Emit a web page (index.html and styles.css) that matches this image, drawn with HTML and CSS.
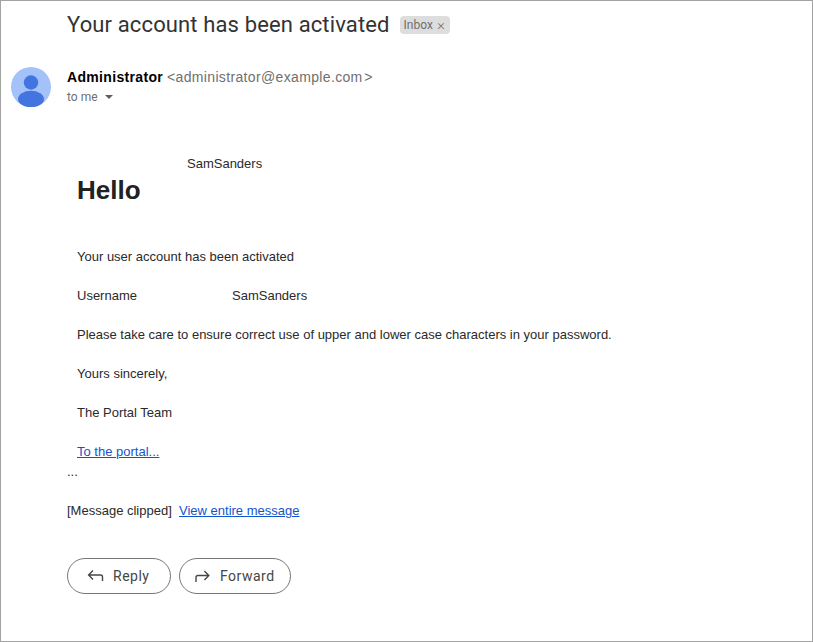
FILE: index.html
```html
<!DOCTYPE html>
<html lang="en">
<head>
<meta charset="utf-8">
<title>Your account has been activated</title>
<link rel="stylesheet" href="styles.css">
</head>
<body>
<main class="frame">
  <header class="subject">
    <h1 class="subject-title">Your account has been activated</h1>
    <span class="label">Inbox<span class="label-x">×</span></span>
  </header>
  <section class="sender">
    <svg class="avatar" viewBox="0 0 40 40" aria-hidden="true">
      <circle cx="20" cy="20" r="20" fill="#a3c2fa"/>
      <circle cx="20" cy="15.5" r="7.2" fill="#4374e0"/>
      <ellipse cx="20" cy="32" rx="13" ry="8.2" fill="#4374e0"/>
    </svg>
    <div class="sender-info">
      <div class="sender-line"><strong class="sender-name">Administrator</strong> <span class="sender-mail">&lt;administrator@example.com&#8202;&gt;</span></div>
      <div class="recipient">to me <span class="caret"></span></div>
    </div>
  </section>
  <article class="message">
    <div class="mail-body">
      <div class="greeting-name">SamSanders</div>
      <h2 class="greeting">Hello</h2>
      <p class="para para-first">Your user account has been activated</p>
      <p class="para user-row"><span class="user-key">Username</span><span>SamSanders</span></p>
      <p class="para">Please take care to ensure correct use of upper and lower case characters in your password.</p>
      <p class="para">Yours sincerely,</p>
      <p class="para">The Portal Team</p>
      <p class="para"><a class="link" href="#">To the portal...</a></p>
    </div>
    <div class="ellipsis">...</div>
    <div class="clipped">[Message clipped]&nbsp; <a class="link" href="#">View entire message</a></div>
  </article>
  <div class="actions">
    <button class="action action-reply" type="button">
      <svg class="action-icon" viewBox="0 0 18 18" aria-hidden="true"><path d="M7 3.6 2.6 8 7 12.4M2.9 8H14.5C15.9 8 16.5 8.8 16.5 10v4" fill="none" stroke="#444746" stroke-width="1.4"/></svg>
      Reply
    </button>
    <button class="action action-forward" type="button">
      <svg class="action-icon" viewBox="0 0 18 18" aria-hidden="true"><path d="M11.4 4.1 15.8 8.5 11.4 12.9M15.5 8.5H5C3.6 8.5 3 9.3 3 10.5V15" fill="none" stroke="#444746" stroke-width="1.4"/></svg>
      Forward
    </button>
  </div>
</main>
</body>
</html>
```
FILE: styles.css
```css
* { box-sizing: border-box; }
html, body { margin: 0; padding: 0; }
body { font-family: "Liberation Sans", Arial, sans-serif; background: #fff; color: #222; }
.frame { width: 813px; height: 642px; border: 1px solid #a3a3a3; padding: 0 0 0 10px; overflow: hidden; }
.subject { display: flex; align-items: center; gap: 10px; margin-left: 56px; height: 48px; }
.subject-title { margin: 0; font-family: Roboto, sans-serif; font-size: 22px; font-weight: 400; letter-spacing: 0.13px; color: #333; line-height: 48px; white-space: nowrap; }
.label { display: flex; align-items: center; gap: 4px; background: #dddddd; color: #707070; font-family: Roboto, sans-serif; font-size: 12px; border-radius: 4px; height: 18px; padding: 0 5px 0 4px; white-space: nowrap; }
.label-x { font-size: 15px; font-weight: 300; }
.sender { display: flex; gap: 16px; margin-top: 18px; height: 40px; }
.avatar { width: 40px; height: 40px; flex: none; }
.sender-line { font-size: 14px; line-height: 20px; white-space: nowrap; }
.sender-name { color: #000; font-weight: 700; letter-spacing: 0.33px; }
.sender-mail { color: #6f6f6f; letter-spacing: 0.35px; }
.recipient { font-family: Roboto, sans-serif; font-size: 12px; color: #6f6f6f; line-height: 20px; display: flex; align-items: center; gap: 6px; }
.caret { width: 0; height: 0; border: 4px solid transparent; border-top: 4px solid #5e5e5e; border-bottom: 0; margin-left: 1px; }
.message { margin: 50px 0 0 56px; font-size: 13px; color: #2a2a2a; }
.mail-body { padding-left: 10px; }
.greeting-name { margin-left: 110px; line-height: 14px; }
.greeting { margin: 4px 0 0; font-size: 26px; font-weight: 700; line-height: 30px; color: #222; }
.para { margin: 0 0 25px; line-height: 14px; white-space: nowrap; }
.para-first { margin-top: 45px; }
.user-row { display: flex; }
.user-key { width: 155px; }
.link { color: #1155cc; text-decoration: underline; }
.ellipsis { line-height: 14px; margin-top: -19px; }
.clipped { margin-top: 25px; line-height: 14px; }
.actions { display: flex; gap: 8px; margin: 40px 0 0 56px; }
.action { display: flex; align-items: center; gap: 9px; height: 36px; border: 1px solid #747775; border-radius: 18px; background: #fff; color: #444746; font-family: Roboto, sans-serif; font-size: 14px; letter-spacing: 0.5px; }
.action-reply { width: 104px; padding: 0 0 0 18px; }
.action-forward { width: 112px; padding: 0 0 0 13px; }
.action-icon { width: 18px; height: 18px; flex: none; }
```
